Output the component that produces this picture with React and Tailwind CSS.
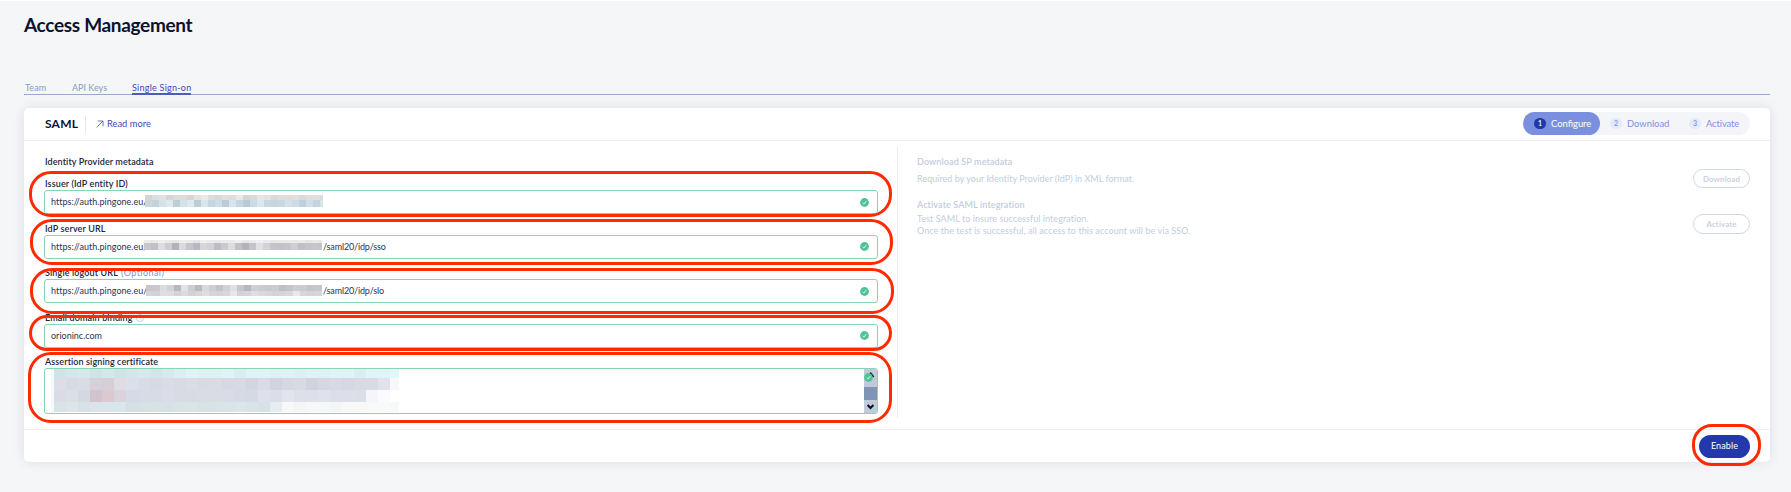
const TINTS = {
  blue: [
    ["#d4d4d4", "#dedede", "#e3e2e1", "#d3d6d7", "#dedddb", "#dcdcdc", "#d8d5d4", "#e4e3e2", "#e9e9e9", "#dddddd", "#d8d8d8", "#e0dfde", "#dddddd", "#e8e8e8", "#d7d5d5", "#dadada", "#e6e6e6", "#e2e2e2", "#dadada", "#dedede", "#dedddc", "#e0e0e0", "#dadada", "#dedede", "#e0e0e0", "#dcdcdc"],
    ["#c9d6de", "#c2d1da", "#d6e2e9", "#dfe9f0", "#bfcdd6", "#d5e1e8", "#dfe8ef", "#bccdd7", "#d9e6ed", "#c6d6e0", "#cddce5", "#bdccd4", "#d6e4ed", "#c6d5df", "#bacad4", "#cbdae3", "#dae7ef", "#c9d7e0", "#c6d6df", "#cad7df", "#d6e0e7", "#cddbe4", "#bfd0da", "#d2dfe7", "#c4d3dc", "#d7e4eb"],
  ],
  mauve: [
    ["#eaecec", "#e6e9e9", "#eef0f0", "#e7eaea", "#e3e6e7", "#eceeee", "#e9eceb", "#e3e5e6", "#eef1f0", "#e9eceb", "#e5e8e8", "#eaedec", "#e8ebeb", "#eef0f0", "#e4e7e7", "#e8ebea", "#eff1f1", "#e9ecec", "#e5e8e8", "#e8ebea", "#e8ebea", "#e5e9e8", "#eaeceb", "#e5e7e7", "#e8eae9", "#e5e8e8"],
    ["#c8c7cb", "#c2c0c6", "#dddce0", "#cfcdd3", "#b3b1bb", "#dcd9dc", "#c6c3c9", "#bab7c2", "#d9d6d9", "#d4d1d6", "#c0bcc5", "#cbc9ce", "#dfdce0", "#c2bfc7", "#b4b2bc", "#c4c3c9", "#e1dfe2", "#d4d2d6", "#c7c3c9", "#c5c2c7", "#c7c5cb", "#d0ced3", "#c1bec5", "#c6c4ca", "#c6c5cc", "#c4c3ca"],
  ],
  gray: [
    ["#c7c6cd", "#c8c8cf", "#dcdbe0", "#d1d1d7", "#b6b7c0", "#e3e3e6", "#cdccd2", "#b8bac2", "#dadadd", "#cecdd3", "#c3c2c9", "#d2d1d5", "#dfdee2", "#c6c6cd", "#b5b7c0", "#cfced3", "#cccbd0", "#c9c8ce", "#cccbd1", "#bfbfc6", "#c5c4cb", "#ccccd1", "#cccbd1", "#c4c4cb", "#c6c6cc", "#c6c6cc"],
    ["#d5d5d8", "#d2d2d6", "#dedee0", "#dddddf", "#d4d4d7", "#dadadc", "#d2d1d4", "#d6d6d9", "#dfdfe1", "#d5d5d7", "#d4d3d6", "#d8d7da", "#e7e6e8", "#d3d3d6", "#d5d5d9", "#dedde0", "#dadadd", "#d8d8da", "#d3d3d6", "#d5d5d8", "#d8d8db", "#e9e7ea", "#d8d7da", "#d5d5d8", "#d6d6d9", "#d6d6d9"],
  ],
};

const CERT = [
  [9, ["#cfe3e8", "#d4e6eb", "#d6e8ec", "#cee4e8", "#d3e8ec", "#cfe4e9", "#d3e7eb", "#d5e9ed", "#d1e6eb", "#d5e9ee", "#daeff3", "#e0f4f7", "#dcf1f4", "#dbf1f4", "#dff4f7", "#d8edf3", "#dff4f7", "#dff4f7", "#dcf1f5", "#def2f6", "#dbf0f4", "#dff3f7", "#dcf2f6", "#dff4f7", "#dff4f7", "#d9eef3", "#e0f5f8", "#dff4f8", "#e2f7fa"]],
  [12, ["#dddde7", "#d8dbe5", "#d9dbe5", "#d8d0d9", "#d7cfd7", "#dfdce3", "#dbdfe9", "#d9dce6", "#d7dae4", "#d9dbe5", "#d8dbe4", "#dadde6", "#d9dbe4", "#d9dce5", "#d6d9e2", "#d8dae3", "#d3d6e0", "#d9dbe6", "#d1d4e0", "#d5d8e3", "#d7dae3", "#d1d4df", "#d5d8e2", "#d7d9e3", "#d5d8e2", "#d7d9e3", "#d8dae4", "#e1e3ec", "#f8f8fb"]],
  [12, ["#dbdbe5", "#d8dfe6", "#d5d8e2", "#d1c4ce", "#dbc9d1", "#d9d3db", "#d5dbe6", "#d6dbe5", "#d7dbe5", "#dcdce8", "#d8dbe4", "#d7dbe4", "#d9dce5", "#d9dce5", "#d9dce6", "#d6dae5", "#d4d9e4", "#dfe0eb", "#dadee8", "#e2e3ed", "#dde0e9", "#dddfe9", "#dfe1ec", "#dadfe8", "#dddfe8", "#dadfe7", "#f5f6fb", "#fbfbfd", "#ffffff"]],
  [10, ["#d9e3e7", "#dbe5ea", "#d6e2e6", "#dbe4ea", "#d8e5e9", "#d9e6ea", "#d5e0e4", "#d6e1e4", "#d7e2e5", "#d5e1e4", "#d8e3e6", "#d9e4e7", "#d6e2e5", "#d8e3e7", "#d9e3e8", "#dae6e9", "#d8e4e8", "#d6e2e6", "#e4edf0", "#f7f9f8", "#f2f6f7", "#f4f8f9", "#f4f8f9", "#f2f6f7", "#f7f9f8", "#f7f8f7", "#f7faf9", "#f8faf9", "#f7f9f9"]],
];

function Redacted({ tint, className }) {
  const heights = tint === "mauve" ? ["h-[3px]", "h-[7px]"] : tint === "gray" ? ["h-[6px]", "h-[5px]"] : ["h-[5px]", "h-[7px]"];
  return (
    <span className={"absolute flex flex-col overflow-hidden " + className}>
      {TINTS[tint].map((row, r) => (
        <span key={r} className={"flex " + heights[r]}>
          {row.map((c, i) => (
            <span key={i} className="w-[7px] shrink-0" style={{ background: c }} />
          ))}
        </span>
      ))}
    </span>
  );
}

function Check() {
  return (
    <svg viewBox="0 0 10 10" className="size-[9px] shrink-0">
      <circle cx="5" cy="5" r="4.9" fill="#52c296" />
      <path d="M3 5.4 4.4 6.8 7 3.3" fill="none" stroke="#e4f7ee" strokeWidth="1" />
    </svg>
  );
}

function Field({ label, hint, children }) {
  return (
    <div className="h-[44.4px]">
      <div className="flex h-[12px] items-center pl-px font-semibold leading-[12px] tracking-[0.13px] text-[#1c2540]">
        {label}
        {hint}
      </div>
      <div className="relative flex h-[24px] items-center justify-between rounded-[3px] border border-[#86d6b4] pl-[6px] pr-[8px] leading-[12px] text-[#2a3450]">
        {children}
        <Check />
      </div>
    </div>
  );
}

function Step({ n, label, active, className }) {
  return (
    <div className={"flex h-full items-center rounded-full " + (active ? "bg-[#7b8fe0] text-white " : "text-[#7d90de] ") + className}>
      <span className={"mr-[5px] flex h-[11px] w-[12px] items-center justify-center rounded-full text-[7px] font-semibold leading-none " + (active ? "bg-[#2338a8]" : "bg-[#e4eafb]")}>
        {n}
      </span>
      {label}
    </div>
  );
}

function Ring({ className }) {
  return <div className={"pointer-events-none absolute border-[3px] border-[#ff2a00] " + className} />;
}

export default function App() {
  return (
    <div className="relative h-[492px] w-[1791px] overflow-hidden border-t border-white bg-[#f4f6f8] pl-[24px] pr-[21px] font-['Lato','Open_Sans',sans-serif] text-[9px]">
      <h1 className="pt-[12px] text-[19px] font-bold leading-[24px] tracking-[-0.32px] text-[#0a1230]">Access Management</h1>

      <nav className="mt-[45px] flex h-[13px] border-b border-[#96abca] text-[#8a9dba]">
        <span className="w-[47px] pl-px leading-[12px] tracking-[0.1px]">Team</span>
        <span className="w-[61px] pl-px leading-[12px]">API Keys</span>
        <span className="h-[13px] border-b-2 border-[#4a5ebb] leading-[12px] tracking-[0.24px] text-[#3a4cb4]">Single Sign-on</span>
      </nav>

      <main className="mt-[13px] flex h-[354px] flex-col rounded-[5px] bg-white shadow-[0_0_12px_rgba(30,40,60,0.11)]">
        <header className="flex h-[33px] shrink-0 items-center border-b border-[#ebedf0] pl-[21px] pr-[20px]">
          <h2 className="w-[40px] text-[12px] font-bold leading-[14px] tracking-[0.2px] text-[#0a1230]">SAML</h2>
          <div className="mr-[10px] h-[17px] w-px bg-[#e6e8ec]" />
          <svg viewBox="0 0 8 8" className="mr-[3px] size-[8px]" fill="none" stroke="#4355b8" strokeWidth="0.8">
            <path d="M0.6 7.4 7 1M1.6 1H7V6.4" />
          </svg>
          <a className="text-[9.3px] leading-[12px] tracking-[0.02px] text-[#3a4cb4]">Read more</a>
          <div className="-mt-px ml-auto flex h-[23px] w-[227px] rounded-full bg-[#f4f5f8] text-[9.4px] leading-[12px]">
            <Step n="1" label="Configure" active className="w-[77px] pl-[11px]" />
            <Step n="2" label="Download" className="w-[79px] pl-[10px]" />
            <Step n="3" label="Activate" className="pl-[10px] tracking-[-0.1px]" />
          </div>
        </header>

        <div className="flex h-[289px] shrink-0 border-b border-[#eef0f2]">
          <section className="w-[873px] pl-[20px] pr-[19px] pt-[15px]">
            <h3 className="mb-[10.4px] pl-px font-semibold leading-[12px] tracking-[0.1px] text-[#1c2540]">Identity Provider metadata</h3>
            <Field label="Issuer (IdP entity ID)">
              <span className="tracking-[0.02px]">https://auth.pingone.eu/</span>
              <Redacted tint="blue" className="left-[100px] top-[4px] w-[178px]" />
            </Field>
            <Field label="IdP server URL">
              <span className="tracking-[0.02px]">https://auth.pingone.eu/</span>
              <span className="absolute left-[278px] tracking-[-0.15px]">/saml20/idp/sso</span>
              <Redacted tint="mauve" className="left-[99px] top-[4px] w-[178px]" />
            </Field>
            <Field label="Single logout URL" hint={<span className="ml-[3px] font-normal tracking-[0.45px] text-[#8196bb]">(Optional)</span>}>
              <span className="tracking-[0.02px]">https://auth.pingone.eu/i</span>
              <span className="absolute left-[278px] tracking-[-0.15px]">/saml20/idp/slo</span>
              <Redacted tint="gray" className="left-[101px] top-[5px] w-[176px]" />
            </Field>
            <Field label="Email domain binding" hint={<span className="ml-[4px] flex size-[8px] items-center justify-center rounded-full border border-[#c5cce8] text-[6px] font-normal text-[#c5cce8]">i</span>}>
              <span>orioninc.com</span>
            </Field>
            <div className="pl-px font-semibold leading-[12px] tracking-[0.1px] text-[#1c2540]">Assertion signing certificate</div>
            <div className="relative flex h-[46px] justify-between overflow-hidden rounded-[3px] border border-[#86d6b4]">
              <div className="ml-[6px] flex border-l-[3px] border-[#f0fbfc]">
                <div>
                  {CERT.map(([h, row], r) => (
                    <div key={r} className="flex" style={{ height: h }}>
                      {row.map((c, i) => (
                        <span key={i} className={i === 28 ? "w-[9px]" : "w-[12px]"} style={{ background: c }} />
                      ))}
                    </div>
                  ))}
                </div>
              </div>
              <div className="relative flex w-[13px] flex-col bg-[#c0cadb]">
                <svg viewBox="0 0 13 18" className="h-[18px] w-[13px]" fill="none" stroke="#0b0f18" strokeWidth="1.8">
                  <path d="M3.5 8 6.7 4.4 9.6 8" />
                </svg>
                <div className="h-[13px] bg-[#8094b6]" />
                <svg viewBox="0 0 13 13" className="h-[13px] w-[13px]" fill="none" stroke="#0b0f18" strokeWidth="2">
                  <path d="M3.6 5 6.5 8 9.4 5" />
                </svg>
                <span className="absolute left-0 top-[4px] flex">
                  <Check />
                </span>
              </div>
            </div>
          </section>

          <div className="mt-[5px] h-[272px] w-px bg-[#e9ecf0]" />

          <section className="flex flex-1 justify-between pl-[19px] pr-[20px] pt-[15px] leading-[12px] text-[#c3cddd]">
            <div>
              <h3 className="font-semibold tracking-[0.12px]">Download SP metadata</h3>
              <p className="mt-[5px] tracking-[0.03px]">Required by your Identity Provider (IdP) in XML format.</p>
              <h3 className="mt-[14px] font-semibold tracking-[0.12px]">Activate SAML integration</h3>
              <p className="mt-[2px] tracking-[0.07px]">
                Test SAML to insure successful integration.
                <br />
                Once the test is successful, all access to this account will be via SSO.
              </p>
            </div>
            <div className="flex flex-col gap-[26px] pt-[13px] text-[8px] font-semibold tracking-[0.1px]">
              <button className="h-[19px] w-[57px] rounded-full border border-[#d0d8e6]">Download</button>
              <button className="h-[20px] w-[57px] rounded-full border border-[#d0d8e6]">Activate</button>
            </div>
          </section>
        </div>

        <footer className="flex flex-1 items-center justify-end pr-[20px]">
          <button className="h-[23px] w-[51px] rounded-full bg-[#2338ab] text-[9px] tracking-[0.1px] text-white">Enable</button>
        </footer>
      </main>

      <Ring className="left-[29px] top-[170px] h-[46px] w-[863px] rounded-[22px]" />
      <Ring className="left-[30px] top-[218px] h-[46px] w-[863px] rounded-[22px]" />
      <Ring className="left-[30px] top-[267px] h-[46px] w-[864px] rounded-[22px]" />
      <Ring className="left-[29px] top-[314px] h-[36px] w-[863px] rounded-[18px]" />
      <Ring className="left-[28px] top-[351px] h-[71px] w-[864px] rounded-[23px]" />
      <Ring className="left-[1692px] top-[423px] h-[42px] w-[69px] rounded-[20px]" />
    </div>
  );
}
